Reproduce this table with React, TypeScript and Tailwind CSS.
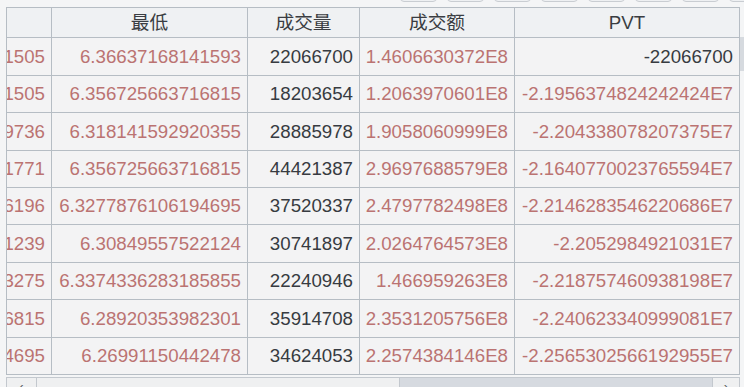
import React from 'react'

const FONT = { fontFamily: '"Liberation Sans", Arial, "Noto Sans CJK SC", sans-serif' }

type Row = { lead: string; low: string; vol: string; amt: string; pvt: string; pvtInt?: boolean }

const ROWS: Row[] = [
  { lead: '6.40707964601505', low: '6.36637168141593', vol: '22066700', amt: '1.4606630372E8', pvt: '-22066700', pvtInt: true },
  { lead: '6.38716814601505', low: '6.356725663716815', vol: '18203654', amt: '1.2063970601E8', pvt: '-2.1956374824242424E7' },
  { lead: '6.36283185819736', low: '6.318141592920355', vol: '28885978', amt: '1.9058060999E8', pvt: '-2.204338078207375E7' },
  { lead: '6.41592920351771', low: '6.356725663716815', vol: '44421387', amt: '2.9697688579E8', pvt: '-2.1640770023765594E7' },
  { lead: '6.38053097346196', low: '6.3277876106194695', vol: '37520337', amt: '2.4797782498E8', pvt: '-2.2146283546220686E7' },
  { lead: '6.35398230091239', low: '6.30849557522124', vol: '30741897', amt: '2.0264764573E8', pvt: '-2.2052984921031E7' },
  { lead: '6.37610619463275', low: '6.3374336283185855', vol: '22240946', amt: '1.466959263E8', pvt: '-2.218757460938198E7' },
  { lead: '6.33185840706815', low: '6.28920353982301', vol: '35914708', amt: '2.3531205756E8', pvt: '-2.240623340999081E7' },
  { lead: '6.31415929204695', low: '6.26991150442478', vol: '34624053', amt: '2.2574384146E8', pvt: '-2.2565302566192955E7' },
]

const ROW_H = ['h-[38px]', 'h-[37px]', 'h-[38px]', 'h-[37px]', 'h-[37px]', 'h-[38px]', 'h-[37px]', 'h-[38px]', 'h-[37px]']

const GRID = 'grid grid-cols-[45px_196px_112px_155px_225px]'
const RED = 'text-[#bb7372]'
const DARK = 'text-[#373b41]'

function Cell({ children, className = '' }: { children: React.ReactNode; className?: string }) {
  return (
    <div className={`flex items-center justify-end overflow-hidden whitespace-nowrap border-r border-[#b6bdc4] pr-[6px] pt-[1px] ${className}`}>
      <span>{children}</span>
    </div>
  )
}

export default function App() {
  return (
    <div className="w-[744px] h-[387px] overflow-hidden bg-[#f4f5f6] text-[18.7px] leading-none" style={FONT}>
      {/* toolbar buttons, cut off at the top */}
      <div className="h-[7px] overflow-hidden flex gap-[10px] pl-[400px]">
        {Array.from({ length: 8 }).map((_, i) => (
          <div key={i} className="w-[37px] h-[12px] -mt-[10px] shrink-0 rounded-[4px] border border-[#c9cdd2] bg-[#eef0f2]" />
        ))}
      </div>

      <div className="flex">
        <div className="ml-[6px] w-[734px] border-l border-t border-[#b6bdc4]">
          {/* header */}
          <div className={`${GRID} h-[30px] border-b border-[#b6bdc4] bg-[#eff1f3] text-[#3a3d42]`}>
            <div className="border-r border-[#b6bdc4]" />
            <div className="flex items-center justify-center border-r border-[#b6bdc4] pt-[2px]">最低</div>
            <div className="flex items-center justify-center border-r border-[#b6bdc4] pt-[2px]">成交量</div>
            <div className="flex items-center justify-center border-r border-[#b6bdc4] pt-[2px]">成交额</div>
            <div className="flex items-center justify-center border-r border-[#b6bdc4] pt-[2px]">PVT</div>
          </div>

          {ROWS.map((r, i) => (
            <div key={i} className={`${GRID} ${ROW_H[i]} border-b border-[#b6bdc4] bg-[#f3f3f4]`}>
              <Cell className={RED}>{r.lead}</Cell>
              <Cell className={RED}>{r.low}</Cell>
              <Cell className={DARK}>{r.vol}</Cell>
              <Cell className={RED}>{r.amt}</Cell>
              <Cell className={r.pvtInt ? DARK : RED}>{r.pvt}</Cell>
            </div>
          ))}
        </div>
        {/* edge of the vertical scrollbar */}
        <div className="w-[4px] flex flex-col">
          <div className="h-[30px]" />
          <div className="h-[34px] bg-[#d6dadf]" />
        </div>
      </div>

      {/* horizontal scrollbar */}
      <div className="mt-[2px] ml-[6px] w-[734px] h-[12px] flex border border-[#c3c8ce] bg-[#eff0f1] text-[#555a60] text-[13px]">
        <div className="w-[30px] border-r border-[#c3c8ce] flex items-start justify-center pt-[2px]">‹</div>
        <div className="w-[362px]" />
        <div className="w-[314px] bg-[#d6dae0] border-l border-r border-[#c3c8ce]" />
        <div className="flex-1 flex items-start justify-center pt-[2px]">›</div>
      </div>
    </div>
  )
}
